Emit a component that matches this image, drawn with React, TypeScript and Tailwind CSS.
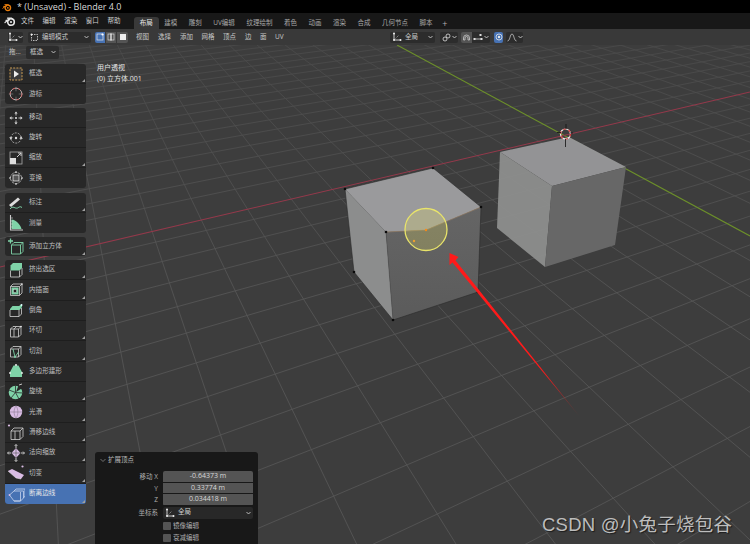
import React from "react";

const A = 0.0222, B = 0.034;
const VR = [1850, -150], VG = [24, -150], O = [565, 133];
function P(au: number, bv: number) {
  const w = 1 + au + bv;
  return [(au * VR[0] + bv * VG[0] + O[0]) / w, (au * VR[1] + bv * VG[1] + O[1]) / w];
}
function gridPath() {
  let d = "";
  for (let u = -18; u <= 16; u++) {
    if (u === 0) continue;
    const au = u * A;
    const p = P(au, 0.2 - 1 - au), q = P(au, 1.7 - 1 - au);
    d += `M${p[0].toFixed(1)} ${p[1].toFixed(1)}L${q[0].toFixed(1)} ${q[1].toFixed(1)}`;
  }
  for (let v = -18; v <= 26; v++) {
    if (v === 0) continue;
    const bv = v * B;
    const p = P(0.2 - 1 - bv, bv), q = P(1.7 - 1 - bv, bv);
    d += `M${p[0].toFixed(1)} ${p[1].toFixed(1)}L${q[0].toFixed(1)} ${q[1].toFixed(1)}`;
  }
  return d;
}

function Scene() {
  return (
    <svg className="absolute inset-0 w-full h-full" viewBox="0 45 750 499">
      <defs>
        <linearGradient id="gridFade" gradientUnits="userSpaceOnUse" x1="0" y1="45" x2="0" y2="300">
          <stop offset="0" stopColor="#4a4a4a" />
          <stop offset="1" stopColor="#565656" />
        </linearGradient>
        <linearGradient id="arrowFade" gradientUnits="userSpaceOnUse" x1="450" y1="254" x2="580" y2="417">
          <stop offset="0.7" stopColor="#ff1a1a" />
          <stop offset="1" stopColor="#ff1a1a" stopOpacity="0.15" />
        </linearGradient>
        <linearGradient id="rightFace" x1="0" y1="0" x2="0" y2="1">
          <stop offset="0" stopColor="#656565" />
          <stop offset="1" stopColor="#5b5b5b" />
        </linearGradient>
      </defs>
      <path d={gridPath()} stroke="url(#gridFade)" strokeWidth="0.85" fill="none" />
      <line x1="397" y1="45" x2="750" y2="236" stroke="#6c8f2a" strokeWidth="1.1" />
      <line x1="0" y1="267" x2="750" y2="92" stroke="#94394b" strokeWidth="1.15" />

      {/* right cube */}
      <polygon points="500,152 569,137 626,167 552,186" fill="#959597" fillOpacity="0.98" />
      <polygon points="500,152 552,186 545,267 497,228" fill="#8c8e8d" fillOpacity="0.96" />
      <polygon points="552,186 626,167 615,245 545,267" fill="#686868" fillOpacity="0.98" />

      {/* selected cube */}
      <polygon points="345,189 433,168 481,207 426,230 386,232" fill="#9a9a9c" />
      <polygon points="345,189 386,232 393,320 354,272" fill="#8e908f" fillOpacity="0.97" />
      <polygon points="386,232 426,230 481,207 478,292 393,320" fill="url(#rightFace)" />
      <path d="M345 189L433 168L481 207L478 292L393 320L354 272Z" fill="none" stroke="#2a2a2a" strokeWidth="0.6" />
      <path d="M386 232L393 320" stroke="#4a4a4a" strokeWidth="0.5" />
      <path d="M386 232L426 230L481 207" fill="none" stroke="#a08468" strokeWidth="0.6" />
      <circle cx="426" cy="229.5" r="21" fill="#e8e060" fillOpacity="0.25" stroke="#e9e46a" strokeWidth="1.3" />
      {[[345, 189], [433, 168], [481, 207], [386, 232], [354, 272], [393, 320], [478, 292]].map(([x, y]) => (
        <circle key={x} cx={x} cy={y} r="1.3" fill="#0a0a0a" />
      ))}
      <circle cx="426" cy="230" r="1.2" fill="#f58a1a" />
      <circle cx="414" cy="241" r="1.2" fill="#eda030" />

      {/* 3D cursor */}
      <g fill="none">
        <circle cx="565.5" cy="134" r="5" stroke="#eeeeee" strokeWidth="1.2" />
        <circle cx="565.5" cy="134" r="5" stroke="#d03030" strokeWidth="1.2" strokeDasharray="2.6 2.6" />
        <path d="M566 124V129M565.5 139V147M557 132.5H561M570 133H573" stroke="#111" strokeWidth="0.8" />
      </g>

      {/* arrow */}
      <polygon points="449.5,253 458.5,257 455.5,260.5 580,417 452.5,262.5 449.5,265" fill="url(#arrowFade)" />
    </svg>
  );
}

const M = "#7fd3a8", L = "#d0d0d0", K = "#d9bce4";
const cube = <path d="M3.5 7L6 4.5H14V12.5L11.5 15H3.5ZM3.5 7H11.5V15M11.5 7L14 4.5" fill="none" stroke={L} strokeWidth="0.8" />;
const shrinkBy = (s: number) => `translate(9 9) scale(${s}) translate(-9 -9)`;

const icons: Record<string, React.ReactNode> = {
  select: (
    <>
      <rect x="3" y="3" width="12" height="12" fill="#3a3a3a" stroke="#c99a52" strokeWidth="1" strokeDasharray="2 1.2" />
      <path d="M7 5.5L12 9L7 12.5Z" fill="#eee" />
    </>
  ),
  cursor: (
    <g transform={shrinkBy(0.9)}>
      <circle cx="9" cy="9" r="6.5" fill="none" stroke="#ddd" strokeWidth="0.9" />
      <circle cx="9" cy="9" r="6.5" fill="none" stroke="#d04040" strokeWidth="0.9" strokeDasharray="3.2 3.2" />
      <path d="M9 1V6M9 12V17M1 9H6M12 9H17" stroke="#999" strokeWidth="0.6" />
    </g>
  ),
  move: (
    <g transform={shrinkBy(0.82)}>
      <path d="M9 3V6M9 12V15M3 9H6M12 9H15" stroke="#ddd" strokeWidth="1" />
      <path d="M9 1L11 3.5H7ZM9 17L7 14.5H11ZM1 9L3.5 7V11ZM17 9L14.5 11V7Z" fill="#ddd" />
      <circle cx="9" cy="9" r="1.3" fill="#ddd" />
    </g>
  ),
  rotate: (
    <g transform={shrinkBy(0.85)}>
      <path d="M3 9A6 6 0 0 1 15 9M15 9A6 6 0 0 1 3 9" fill="none" stroke="#ccc" strokeWidth="0.9" strokeDasharray="2.4 1.4" />
      <path d="M1 8H5L3 11ZM13 10H17L15 7Z" fill="#ddd" />
      <circle cx="9" cy="9" r="1.4" fill="#ddd" />
    </g>
  ),
  scale: (
    <>
      <rect x="3" y="3" width="12" height="12" fill="none" stroke="#aaa" strokeWidth="0.8" />
      <rect x="3" y="9" width="6" height="6" fill="#ddd" />
      <path d="M10 8L14 4M11 4H14V7" fill="none" stroke="#ddd" strokeWidth="0.9" />
    </>
  ),
  transform: (
    <g transform={shrinkBy(0.85)}>
      <circle cx="9" cy="9" r="6.5" fill="none" stroke="#ccc" strokeWidth="0.9" strokeDasharray="3 1" />
      <rect x="5.5" y="5.5" width="7" height="7" fill="#555" stroke="#ddd" strokeWidth="1" />
      <path d="M9 0.5L10.5 2.5H7.5ZM9 17.5L7.5 15.5H10.5ZM0.5 9L2.5 7.5V10.5ZM17.5 9L15.5 10.5V7.5Z" fill="#ddd" />
    </g>
  ),
  annotate: (
    <>
      <path d="M2 11L11 3.5L13 5.5L4 13Z" fill="#ddd" />
      <path d="M3 15C6 11 8 15 10.5 14C12.5 13 13 12 15 13.5" fill="none" stroke={M} strokeWidth="1" />
    </>
  ),
  measure: (
    <>
      <path d="M3.5 1V16H16" fill="none" stroke="#ccc" strokeWidth="1.1" />
      <path d="M4.5 5.5C9 6 13.5 10.5 14.5 15H4.5Z" fill={M} />
      <path d="M4 4H6M4 7H6M4 10H6M4 13H6" stroke="#ccc" strokeWidth="0.6" />
    </>
  ),
  addCube: (
    <>
      <path d="M4.5 7L7 4.5H16V13.5L13.5 16H4.5ZM4.5 7H13.5V16M13.5 7L16 4.5" fill="none" stroke={M} strokeWidth="0.9" />
      <path d="M3.5 0.5V5.5M1 3H6" stroke={M} strokeWidth="1.3" />
    </>
  ),
  extrude: (
    <>
      <path d="M3.5 4.5L6 2H15V7L12.5 9.5H3.5Z" fill={M} />
      <path d="M3.5 9.5V16H12.5V9.5M12.5 16L15 13.5V7" fill="none" stroke={L} strokeWidth="0.8" />
    </>
  ),
  inset: (
    <>
      <path d="M3.5 5.5L6 3H15V12L12.5 14.5H3.5ZM12.5 5.5V14.5M3.5 5.5H12.5L15 3" fill="none" stroke={L} strokeWidth="0.8" />
      <rect x="4.5" y="6.5" width="7" height="7" fill={M} />
      <rect x="6.5" y="8.5" width="3" height="3" fill="#222" stroke="#ddd" strokeWidth="0.4" />
      <circle cx="15" cy="3" r="0.8" fill="#eee" />
    </>
  ),
  bevel: (
    <>
      <path d="M3 8L5.5 5H12L15 3V6L12.5 9H3Z" fill={M} />
      <path d="M3 9V15.5H12V9M12 15.5L14.5 13V7" fill="none" stroke={L} strokeWidth="0.8" />
      <circle cx="14.5" cy="4" r="1" fill="#dff" />
    </>
  ),
  loop: (
    <>
      {cube}
      <path d="M7 15V7L9.5 4.5" fill="none" stroke={L} strokeWidth="0.8" />
      <circle cx="14" cy="4.5" r="0.8" fill="#eee" />
    </>
  ),
  knife: (
    <>
      {cube}
      <path d="M6 7L8 15L11.5 10" fill="none" stroke={M} strokeWidth="0.9" />
      <circle cx="8" cy="15" r="0.9" fill={M} />
    </>
  ),
  poly: (
    <>
      <path d="M6.5 3.5L11.5 3.5L15 10V15H3V10Z" fill={M} />
      <circle cx="9" cy="3" r="1" fill="#eee" />
      <circle cx="15" cy="11" r="0.9" fill="#eee" />
      <circle cx="3" cy="11" r="0.9" fill="#eee" />
    </>
  ),
  spin: (
    <>
      <circle cx="8.5" cy="9.5" r="6.8" fill={M} />
      <path d="M8.5 9.5L8.5 2.5M8.5 9.5L2 7M8.5 9.5L4 15M8.5 9.5L12 16M8.5 9.5L15.5 10" stroke="#2a2a2a" strokeWidth="0.8" />
      <path d="M9 9L12 1L17 4Z" fill="#282828" />
      <path d="M12 2L15 1" stroke="#eee" strokeWidth="0.8" />
    </>
  ),
  smooth: (
    <>
      <circle cx="9" cy="9" r="6.2" fill={K} />
      <path d="M3 9H15M9 3C6.5 6 6.5 12 9 15M9 3C11.5 6 11.5 12 9 15" fill="none" stroke="#8c7a92" strokeWidth="0.6" />
    </>
  ),
  slide: (
    <>
      <path d="M4 8L7 5H16V13.5L13 16.5H4ZM4 8H13V16.5M13 8L16 5M8 8V16.5" fill="none" stroke={L} strokeWidth="0.8" />
      <circle cx="2" cy="2.5" r="1.1" fill={K} />
    </>
  ),
  shrink: (
    <>
      <path d="M9 4L13.5 9L9 14L4.5 9Z" fill={K} />
      <path d="M9 4V14M4.5 9H13.5" stroke="#555" strokeWidth="0.6" />
      <path d="M9 0.5V4M9 14V17.5M0.5 9H4M14 9H17.5" stroke="#ddd" strokeWidth="0.9" />
      <path d="M7.5 2L9 0.5L10.5 2M7.5 16L9 17.5L10.5 16M2 7.5L0.5 9L2 10.5M16 7.5L17.5 9L16 10.5" fill="none" stroke="#ddd" strokeWidth="0.7" />
    </>
  ),
  shear: (
    <>
      <path d="M1 7L5 5L17 11L14 15L9 14Z" fill={K} />
      <path d="M1 7L9 14L14 15" fill="none" stroke="#eee" strokeWidth="0.5" />
      <circle cx="15.5" cy="2.5" r="1.1" fill={K} />
    </>
  ),
  rip: (
    <>
      <path d="M2.5 10L7 6H16.5V13L13.5 16H7ZM7 6L9 4H18V11L16.5 13M7 16H13.5V7" fill="none" stroke="#c8d4ee" strokeWidth="0.8" />
      <circle cx="2.5" cy="10" r="0.9" fill={K} />
    </>
  ),
};

type Tool = { icon: string; label: string; corner?: boolean; active?: boolean };

function Row({ t, h }: { t: Tool; h: string }) {
  return (
    <div className={`relative flex items-center pl-[2px] border-b border-[#1e1e1e] last:border-b-0 ${h} ${t.active ? "bg-[#4772b3] text-[#e8e8e8]" : "text-[#c0c0c0]"}`}>
      <svg width="18" height="18" viewBox="0 0 18 18" className="shrink-0">{icons[t.icon]}</svg>
      <span className="ml-1 text-[6.6px] leading-none">{t.label}</span>
      {t.corner && <span className="absolute right-[1px] bottom-[1px] w-0 h-0 border-l-[3px] border-l-transparent border-b-[3px] border-b-[#a0a0a0]" />}
    </div>
  );
}

function Group({ tools, cls, h }: { tools: Tool[]; cls: string; h: string }) {
  return (
    <div className={`rounded-[3px] overflow-hidden bg-[#282828] ${cls}`}>
      {tools.map((t) => <Row key={t.label} t={t} h={h} />)}
    </div>
  );
}

function Chevron({ className = "" }: { className?: string }) {
  return (
    <svg width="5" height="4" viewBox="0 0 5 4" className={`shrink-0 ${className}`}>
      <path d="M0.5 1L2.5 3L4.5 1" fill="none" stroke="#c8c8c8" strokeWidth="0.9" />
    </svg>
  );
}

function Gizmo() {
  return (
    <svg width="10" height="10" viewBox="0 0 10 10" className="shrink-0">
      <path d="M2 1V8H9" fill="none" stroke="#ddd" strokeWidth="0.9" />
      <path d="M2 8L7 3" stroke="#bbb" strokeWidth="0.7" strokeDasharray="1.2 1" />
      <circle cx="2" cy="1.4" r="1" fill="#eee" />
      <circle cx="8.5" cy="8" r="1" fill="#eee" />
      <circle cx="2" cy="8" r="1" fill="#eee" />
    </svg>
  );
}

function Blender({ color, size }: { color: string; size: number }) {
  return (
    <svg width={size} height={size} viewBox="0 0 12 12" className="shrink-0">
      <circle cx="7" cy="7" r="3.3" fill="none" stroke={color} strokeWidth="1.6" />
      <circle cx="7" cy="7" r="1.1" fill={color} />
      <path d="M1 7.5L5 4.2M3.5 3.2H7.5L8.5 4M2 5.3H5" stroke={color} strokeWidth="1.2" fill="none" strokeLinecap="round" />
    </svg>
  );
}

const tabs = ["布局", "建模", "雕刻", "UV编辑", "纹理绘制", "着色", "动画", "渲染", "合成", "几何节点", "脚本"];
const menus = ["文件", "编辑", "渲染", "窗口", "帮助"];
const viewMenus = [["视图", "w-[22px]"], ["选择", "w-[22px]"], ["添加", "w-[21.5px]"], ["网格", "w-[21.5px]"], ["顶点", "w-[22px]"], ["边", "w-[15px]"], ["面", "w-[15px]"], ["UV", "w-[15px]"]];

export default function App() {
  return (
    <div className="w-[750px] h-[544px] overflow-hidden flex flex-col bg-[#3d3d3d] text-[#c8c8c8] font-['Open_Sans','Noto_Sans_CJK_SC',sans-serif]">
      {/* title bar */}
      <div className="h-[13px] shrink-0 bg-black flex items-center pl-[2px] gap-[5px]">
        <Blender color="#e87d0d" size={10} />
        <span className="text-[9px] leading-none text-[#d8d8d8]">* (Unsaved) - Blender 4.0</span>
      </div>

      {/* top bar */}
      <div className="h-[16px] shrink-0 bg-[#181818] flex items-end">
        <div className="h-full flex items-center pl-[4px] w-[134px]">
          <Blender color="#e8e8e8" size={12} />
          <div className="flex items-center ml-[5px] gap-[8.6px]">
            {menus.map((m) => <span key={m} className="text-[6.5px] leading-none text-[#cfcfcf]">{m}</span>)}
          </div>
        </div>
        {tabs.map((t, i) => (
          <span key={t} className={`h-[12px] px-[5.75px] flex items-center text-[6.5px] leading-none rounded-t-[3px] ${i === 0 ? "bg-[#393939] text-[#e8e8e8]" : "text-[#a8a8a8]"}`}>{t}</span>
        ))}
        <span className="h-[12px] pl-[4px] flex items-center text-[9px] leading-none text-[#b0b0b0]">+</span>
      </div>

      {/* header */}
      <div className="h-[16px] shrink-0 bg-[#393939] flex items-center pl-[8px] relative z-10">
        <div className="w-[15px] h-[11px] bg-[#2c2c2c] rounded-[2px] flex items-center justify-center">
          <Gizmo />
          <Chevron />
        </div>
        <div className="ml-[5px] w-[63px] h-[11px] bg-[#2c2c2c] rounded-[2px] flex items-center pl-[2px] pr-[2px]">
          <svg width="9" height="9" viewBox="0 0 9 9" className="shrink-0">
            <rect x="1.5" y="1.5" width="6" height="6" fill="none" stroke="#ddd" strokeWidth="0.8" strokeDasharray="1.5 1" />
            <circle cx="1.5" cy="1.5" r="1" fill="#eee" />
          </svg>
          <span className="ml-[3px] text-[6.5px] leading-none">编辑模式</span>
          <Chevron className="ml-auto" />
        </div>
        <div className="ml-[4px] flex h-[11px] gap-[1px]">
          <div className="w-[10px] bg-[#4772b3] rounded-l-[2px] flex items-center justify-center">
            <svg width="8" height="8" viewBox="0 0 8 8"><rect x="1" y="1" width="6" height="6" fill="none" stroke="#e8e8e8" strokeWidth="0.7" /><circle cx="6.5" cy="1.5" r="1.1" fill="#fff" /></svg>
          </div>
          <div className="w-[10px] bg-[#545454] flex items-center justify-center">
            <svg width="8" height="8" viewBox="0 0 8 8"><rect x="1" y="1" width="6" height="6" fill="none" stroke="#ddd" strokeWidth="0.7" /><path d="M4 0.5V7.5" stroke="#fff" strokeWidth="1.2" /></svg>
          </div>
          <div className="w-[11px] bg-[#545454] rounded-r-[2px] flex items-center justify-center">
            <svg width="8" height="8" viewBox="0 0 8 8"><rect x="1" y="1" width="6" height="6" fill="#eee" /></svg>
          </div>
        </div>
        <div className="ml-[4px] flex items-center pl-[4px]">
          {viewMenus.map(([m, w]) => <span key={m} className={`${w} text-[6.5px] leading-none`}>{m}</span>)}
        </div>
        <div className="ml-[100px] w-[45px] h-[11px] bg-[#2c2c2c] rounded-[2px] flex items-center pl-[2px] pr-[2px]">
          <Gizmo />
          <span className="ml-[3px] text-[6.5px] leading-none">全局</span>
          <Chevron className="ml-auto" />
        </div>
        <div className="ml-[5px] w-[18px] h-[11px] bg-[#2c2c2c] rounded-[2px] flex items-center pl-[2px] gap-[1px]">
          <svg width="9" height="9" viewBox="0 0 9 9"><circle cx="3" cy="6" r="2" fill="none" stroke="#ddd" strokeWidth="0.8" /><circle cx="6" cy="3" r="2" fill="none" stroke="#ddd" strokeWidth="0.8" /></svg>
          <Chevron />
        </div>
        <div className="ml-[3px] w-[11px] h-[11px] bg-[#545454] rounded-l-[2px] flex items-center justify-center">
          <svg width="9" height="9" viewBox="0 0 9 9"><path d="M1.5 5A3 3 0 0 1 7.5 5V7H6V5A1.5 1.5 0 0 0 3 5V7H1.5Z" fill="none" stroke="#ccc" strokeWidth="0.8" /></svg>
        </div>
        <div className="w-[18px] h-[11px] bg-[#2c2c2c] rounded-r-[2px] flex items-center pl-[1px] gap-[1px]">
          <svg width="10" height="9" viewBox="0 0 10 9"><path d="M1 6H9" stroke="#ddd" strokeWidth="0.8" /><rect x="0.5" y="5" width="2" height="2" fill="#ddd" /><rect x="7.5" y="5" width="2" height="2" fill="#ddd" /><rect x="6.5" y="1" width="2" height="2" fill="#ddd" /></svg>
          <Chevron />
        </div>
        <div className="ml-[4px] w-[9px] h-[11px] bg-[#4772b3] rounded-[2px] flex items-center justify-center">
          <svg width="8" height="8" viewBox="0 0 8 8"><circle cx="4" cy="4" r="3" fill="none" stroke="#e8e8e8" strokeWidth="0.8" /><circle cx="4" cy="4" r="1.2" fill="#e8e8e8" /></svg>
        </div>
        <div className="ml-[3px] w-[17px] h-[11px] bg-[#2c2c2c] rounded-[2px] flex items-center pl-[1px] gap-[1px]">
          <svg width="10" height="9" viewBox="0 0 10 9"><path d="M0.5 8C3 8 3 1 5 1C7 1 7 8 9.5 8" fill="none" stroke="#ccc" strokeWidth="0.8" /></svg>
          <Chevron />
        </div>
      </div>

      {/* viewport */}
      <div className="relative flex-1 min-h-0">
        <Scene />

        <div className="relative flex flex-col">
          {/* tool settings */}
          <div className="h-[14px] flex items-center pl-[9px]">
            <span className="w-[17px] text-[6.5px] leading-none">拖...</span>
            <div className="w-[33px] h-[13px] bg-[#2c2c2c] rounded-[2px] flex items-center pl-[4px] pr-[3px]">
              <span className="text-[6.5px] leading-none">框选</span>
              <Chevron className="ml-auto" />
            </div>
          </div>

          {/* tool shelf */}
          <div className="w-[81px] ml-[5px] mt-[5px] flex flex-col">
            <Group h="h-[20px]" cls="" tools={[
              { icon: "select", label: "框选", corner: true },
              { icon: "cursor", label: "游标" },
            ]} />
            <Group h="h-[20px]" cls="mt-[4px]" tools={[
              { icon: "move", label: "移动" },
              { icon: "rotate", label: "旋转" },
              { icon: "scale", label: "缩放", corner: true },
              { icon: "transform", label: "变换" },
            ]} />
            <Group h="h-[20px]" cls="mt-[5px]" tools={[
              { icon: "annotate", label: "标注", corner: true },
              { icon: "measure", label: "测量" },
            ]} />
            <Group h="h-[19px]" cls="mt-[4px]" tools={[{ icon: "addCube", label: "添加立方体", corner: true }]} />
            <Group h="h-[20.33px]" cls="mt-[4px]" tools={[
              { icon: "extrude", label: "挤出选区", corner: true },
              { icon: "inset", label: "内插面", corner: true },
              { icon: "bevel", label: "倒角" },
              { icon: "loop", label: "环切", corner: true },
              { icon: "knife", label: "切割", corner: true },
              { icon: "poly", label: "多边形建形" },
              { icon: "spin", label: "旋绕", corner: true },
              { icon: "smooth", label: "光滑", corner: true },
              { icon: "slide", label: "滑移边线", corner: true },
              { icon: "shrink", label: "法向缩放", corner: true },
              { icon: "shear", label: "切变", corner: true },
              { icon: "rip", label: "断离边线", corner: true, active: true },
            ]} />
          </div>
        </div>

        {/* viewport text */}
        <div className="absolute left-[97px] top-[19px] flex flex-col gap-[3px] text-[7px] leading-[8px] text-[#e4e4e4]">
          <span>用户透视</span>
          <span>(0) 立方体.001</span>
        </div>

        {/* redo panel */}
        <div className="absolute left-[95px] top-[407px] w-[163px] h-[92px] bg-[#181818] rounded-t-[3px] text-[6.5px] text-[#b0b0b0]">
          <div className="h-[16px] mb-[3px] flex items-center pl-[5px]">
            <svg width="6" height="5" viewBox="0 0 6 5"><path d="M0.5 1L3 3.5L5.5 1" fill="none" stroke="#999" strokeWidth="0.7" /></svg>
            <span className="ml-[2px] text-[#b8b8b8]">扩展顶点</span>
          </div>
          <div className="grid grid-cols-[63px_90px] gap-x-[5px]">
            <div className="flex flex-col text-right leading-[11.5px]">
              <span>移动 X</span>
              <span>Y</span>
              <span>Z</span>
            </div>
            <div className="flex flex-col gap-[1px] rounded-[2px] overflow-hidden text-[#d8d8d8] text-[7px] text-center leading-[10.6px]">
              <span className="bg-[#545454]">-0.64373 m</span>
              <span className="bg-[#545454]">0.33774 m</span>
              <span className="bg-[#545454]">0.034418 m</span>
            </div>
            <span className="mt-[1px] text-right leading-[12px]">坐标系</span>
            <div className="mt-[1px] h-[12px] bg-[#282828] rounded-[2px] flex items-center pl-[2px] pr-[2px] text-[#d0d0d0]">
              <Gizmo />
              <span className="ml-[3px] leading-none">全局</span>
              <Chevron className="ml-auto" />
            </div>
          </div>
          <div className="ml-[68px] mt-[3px] h-[9px] flex items-center gap-[2px]">
            <span className="w-[8px] h-[8px] rounded-[1px] bg-[#545454]" />
            <span className="leading-none">镜像编辑</span>
          </div>
          <div className="ml-[68px] mt-[3px] h-[9px] flex items-center gap-[2px]">
            <span className="w-[8px] h-[8px] rounded-[1px] bg-[#545454]" />
            <span className="leading-none">衰减编辑</span>
          </div>
        </div>

        {/* watermark */}
        <div className="absolute left-[542px] top-[468px] text-[18.5px] tracking-[0.25px] leading-[24px] whitespace-nowrap text-[#bdbdbd] font-['Liberation_Sans','Noto_Sans_CJK_SC',sans-serif] [text-shadow:1px_1px_1px_#1c1c1c]">
          CSDN @小兔子烧包谷
        </div>
      </div>
    </div>
  );
}
